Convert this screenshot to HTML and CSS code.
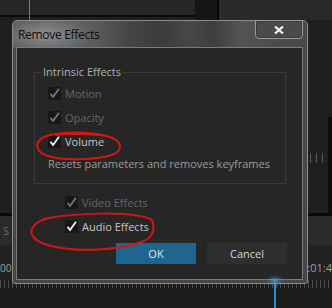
FILE: index.html
```html
<!DOCTYPE html>
<html>
<head>
<meta charset="utf-8">
<link rel="stylesheet" href="styles.css">
</head>
<body>
<div class="app">
  <div class="top">
    <div class="top-left"></div>
    <div class="top-gap"></div>
    <div class="top-right"></div>
  </div>
  <div class="mid">
    <div class="mid-side"><div class="ticks"></div></div>
    <div class="mid-edge"></div>
  </div>
  <div class="track"><span class="track-label">S</span></div>
  <div class="lower"><span class="tc-left">00</span><span class="tc-right">0:01:4</span></div>
  <div class="ruler"></div>
</div>
<div class="cti-top"></div>

<div class="dialog">
  <div class="titlebar">
    <span class="title">Remove Effects</span>
    <div class="close">
      <svg width="10" height="8" viewBox="0 0 10 8"><path d="M1 0.5 L9 7.5 M9 0.5 L1 7.5" stroke="#f4f4f4" stroke-width="2.2" fill="none"/></svg>
    </div>
  </div>
  <div class="content">
    <div class="group">
      <div class="group-label">Intrinsic Effects</div>
      <div class="row disabled first"><span class="cb"><svg width="13" height="13" viewBox="0 0 13 13"><path d="M2.5 6.8 L5 10 L11 1.8" fill="none" stroke-width="1.8"/></svg></span>Motion</div>
      <div class="row disabled"><span class="cb"><svg width="13" height="13" viewBox="0 0 13 13"><path d="M2.5 6.8 L5 10 L11 1.8" fill="none" stroke-width="1.8"/></svg></span>Opacity</div>
      <div class="row"><span class="cb"><svg width="13" height="13" viewBox="0 0 13 13"><path d="M2.5 6.8 L5 10 L11 1.8" fill="none" stroke-width="1.8"/></svg></span>Volume</div>
      <div class="desc">Resets parameters and removes keyframes</div>
    </div>
    <div class="row outer disabled gap-top"><span class="cb"><svg width="13" height="13" viewBox="0 0 13 13"><path d="M2.5 6.8 L5 10 L11 1.8" fill="none" stroke-width="1.8"/></svg></span>Video Effects</div>
    <div class="row outer"><span class="cb"><svg width="13" height="13" viewBox="0 0 13 13"><path d="M2.5 6.8 L5 10 L11 1.8" fill="none" stroke-width="1.8"/></svg></span>Audio Effects</div>
    <div class="buttons">
      <button class="btn ok">OK</button>
      <button class="btn cancel">Cancel</button>
    </div>
  </div>
</div>

<div class="playhead"></div>

<svg class="marks" width="332" height="308" viewBox="0 0 332 308">
  <path d="M110 137 C92 131 58 131 44 137 C34 142 35 152 48 156 C64 161 100 160 114 154 C123 150 122 141 110 137 C98 134 70 133 56 135" fill="none" stroke="#cf1717" stroke-width="2" stroke-linecap="round"/>
  <path d="M44 219 C78 212 128 212 148 218 C152 219 153 221 153 224 C155 233 150 240 138 243 C118 250 80 252 56 247 C36 243 29 236 32 229 C34 224 38 221 46 219" fill="none" stroke="#cf1717" stroke-width="2" stroke-linecap="round"/>
</svg>
</body>
</html>
```

FILE: styles.css
```css
* { box-sizing: border-box; }
html, body { margin: 0; padding: 0; }
body {
  width: 332px;
  height: 308px;
  overflow: hidden;
  position: relative;
  background: #1f1f1f;
  font-family: "Open Sans", "Noto Sans", sans-serif;
}

/* background app */
.app { display: flex; flex-direction: column; }
.top { display: flex; height: 20px; background: #1f1f1f; }
.top-left { width: 195px; height: 17px; background: #262626; border-bottom: 2px solid #0b0b0b; }
.top-gap { width: 24px; background: #151515; border-right: 2px solid #050505; }
.top-right { flex: 1; background: #292929; }

.mid { height: 193px; display: flex; justify-content: flex-end; background: #1f1f1f; }
.mid-side { width: 24px; padding-top: 133px; }
.ticks {
  height: 10px;
  background: repeating-linear-gradient(90deg, #575757 0 1px, transparent 1px 6px);
}
.mid-edge { width: 4px; margin-top: 97px; background: #0d0d0d; }

.track {
  height: 33px;
  border-top: 3px solid #0a0a0a;
  background: #2a2a2a;
  padding-left: 3px;
}
.track-label { font-size: 11px; line-height: 30px; color: #6d6d6d; }

.lower {
  height: 34px;
  background: #212121;
  display: flex;
  justify-content: space-between;
  align-items: flex-start;
  padding-top: 15px;
  font-size: 11px;
  line-height: 14px;
  color: #a0a0a0;
}
.tc-left { margin-left: 0; font-size: 10px; }
.tc-right { width: 31px; overflow: hidden; white-space: nowrap; }

.ruler {
  height: 28px;
  background-color: #1c1c1c;
  background-image: repeating-linear-gradient(90deg, #4c4c4c 0 1px, transparent 1px 4px);
  background-size: 100% 8px;
  background-repeat: no-repeat;
}

.cti-top {
  position: absolute;
  left: 29px;
  top: 0;
  width: 1px;
  height: 20px;
  background: #3292cc;
}

/* dialog */
.dialog {
  position: absolute;
  left: 12px;
  top: 20px;
  width: 296px;
  height: 264px;
  border: 1px solid #8d8d8d;
  border-radius: 5px 5px 3px 3px;
  padding: 0 4px 3px 3px;
  display: flex;
  flex-direction: column;
  background:
    radial-gradient(ellipse 50px 18px at 32px 14px, rgba(255,255,255,0.28), rgba(255,255,255,0) 100%),
    linear-gradient(90deg, #5a5a5a 0px, #636363 30px, #5c5c5c 80px, #464646 115px, #3b3b3b 145px, #474747 178px, #3d3d3d 200px, #555555 228px, #4b4b4b 260px, #484848 296px) 0 0 / 100% 27px no-repeat,
    #474747;
}
.titlebar { height: 26px; display: flex; align-items: flex-start; }
.title {
  padding-left: 2px;
  padding-top: 6px;
  font-size: 12px;
  line-height: 16px;
  letter-spacing: -0.3px;
  color: #0c0c0c;
}
.close {
  margin-left: auto;
  margin-top: -1px;
  width: 48px;
  height: 19px;
  border: 1px solid #9a9a9a;
  border-radius: 0 0 4px 4px;
  background: #4a4a4a;
  box-shadow: inset 0 0 0 1px #3a3a3a;
  display: flex;
  align-items: center;
  justify-content: center;
  padding-top: 1px;
}
.close svg { display: block; }

.content {
  height: 233px;
  border: 1px solid #7b7b7b;
  background: #262626;
  padding: 0 16px 0 17px;
}
.group {
  margin-top: 24px;
  border: 1px solid #3a3a3a;
  padding: 0 0 8px 13px;
}
.group-label {
  width: fit-content;
  margin: -8px 0 0 -6px;
  padding: 0 1px;
  background: #262626;
  font-size: 11px;
  line-height: 14px;
  color: #b2b2b2;
}
.row {
  display: flex;
  align-items: center;
  height: 24px;
  font-size: 11px;
  color: #c6c6c6;
}
.row.first { margin-top: 2px; }
.row.disabled { color: #676767; }
.row.outer { padding-left: 31px; }
.row.gap-top { margin-top: 6px; }
.cb {
  width: 13px;
  height: 13px;
  margin-right: 4px;
  background: #171717;
  display: flex;
}
.cb svg { display: block; }
.cb path { stroke: #f2f2f2; }
.row.disabled .cb path { stroke: #767676; }
.desc {
  height: 22px;
  line-height: 22px;
  font-size: 11px;
  color: #9c9c9c;
}
.buttons {
  display: flex;
  justify-content: flex-end;
  gap: 11px;
  margin-top: 5px;
  margin-right: -1px;
}
.btn {
  width: 80px;
  height: 21px;
  border: none;
  padding: 0;
  font-family: "Open Sans", "Noto Sans", sans-serif;
  font-size: 11px;
}
.btn.ok { background: #1e6690; color: #e4e4e4; }
.btn.cancel { background: #2e2e2e; color: #d6d6d6; }

/* playhead over ruler */
.playhead {
  position: absolute;
  left: 274px;
  top: 281px;
  width: 2px;
  height: 27px;
  background: #2f8fd0;
}
.playhead::before {
  content: "";
  position: absolute;
  left: -5px;
  top: -3px;
  width: 12px;
  height: 5px;
  border-radius: 50%;
  background: rgba(70, 170, 235, 0.75);
  filter: blur(2px);
}

.marks { position: absolute; left: 0; top: 0; pointer-events: none; }
```
